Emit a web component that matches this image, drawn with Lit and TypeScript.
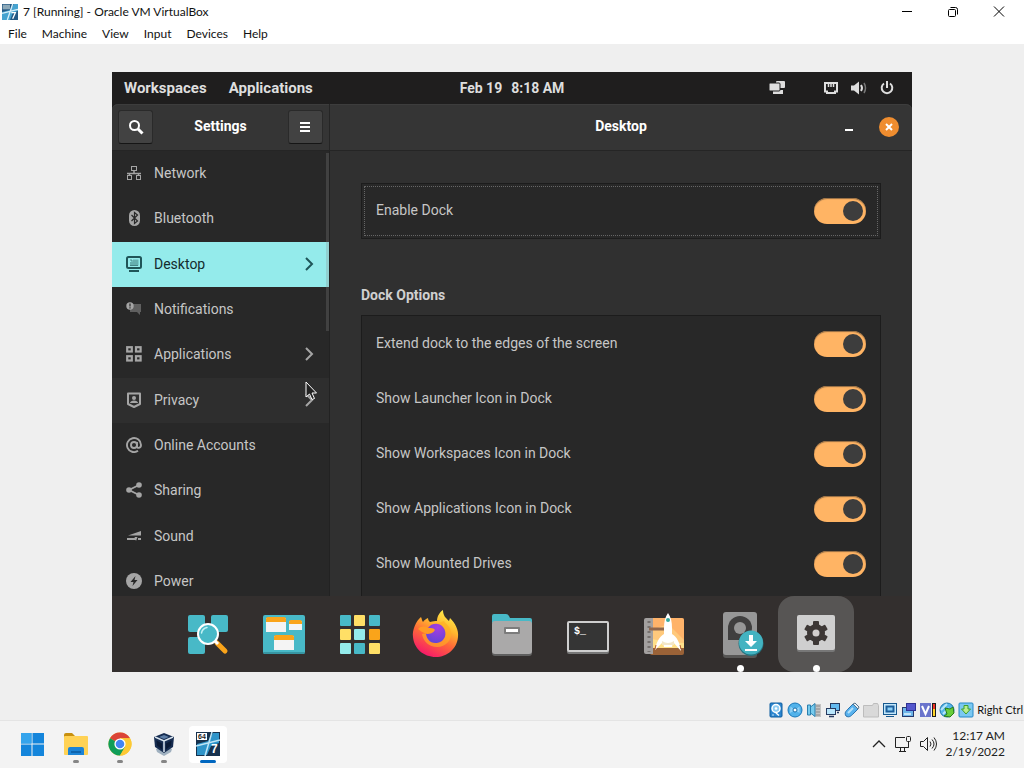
import { LitElement, html, svg, css } from "lit";
import { customElement, state } from "lit/decorators.js";
import { classMap } from "lit/directives/class-map.js";

const icon = (size: number, body: unknown) =>
  html`<svg width=${size} height=${size} viewBox="0 0 ${size} ${size}" aria-hidden="true">${body}</svg>`;

/* 16px symbolic icons of the settings sidebar */
const side: Record<string, unknown> = {
  network: svg`<g fill="none" stroke="currentColor"><rect x="5.5" y="1.5" width="5" height="4"/><rect x="1.5" y="10.5" width="4" height="4"/><rect x="10.5" y="10.5" width="4" height="4"/><path d="M8 5.500v3M1 8.500h14M3.500 8.500v2M12.500 8.500v2" stroke-width="1.500"/></g>`,
  bluetooth: svg`<rect x="3" y="0" width="11" height="16" rx="5.500" fill="currentColor"/><path d="M5.500 5l6 6L8.500 13.500v-11L11.500 5l-6 6" fill="none" stroke="#282828" stroke-width="1.200"/>`,
  desktop: svg`<rect x="1" y="1" width="14" height="11" rx="1.500" fill="none" stroke="currentColor" stroke-width="2"/><path d="M3 15h10" stroke="currentColor" stroke-width="2"/><path d="M4 8V6h3V3.500h5.500V9.500H4z" fill="currentColor" opacity=".4"/><path d="M4 4h2v2M4 9.500h8" fill="none" stroke="currentColor" opacity=".6"/>`,
  notifications: svg`<path d="M6 3h9v8h-1v3l-3-3H4V8z" fill="currentColor" opacity=".45"/><circle cx="4" cy="5" r="3.700" fill="currentColor"/><path d="M4 2.500v3M4 6.300v1.200" stroke="#282828" stroke-width="1.200"/>`,
  applications: svg`<g fill="none" stroke="currentColor" stroke-width="2.200"><rect x="1.200" y="1.200" width="4.600" height="4.300"/><rect x="10" y="1.200" width="4.600" height="4.300"/><rect x="1.200" y="10.200" width="4.600" height="4.300"/><rect x="10" y="10.200" width="4.600" height="4.300"/></g>`,
  privacy: svg`<path d="M2 1.500h12v10.500l-6 3-6-3z" fill="none" stroke="currentColor" stroke-width="2" stroke-linejoin="round"/><circle cx="8" cy="6" r="2" fill="currentColor"/><path d="M4 11c0-3.500 8-3.500 8 0z" fill="currentColor"/>`,
  accounts: svg`<g fill="none" stroke="currentColor" stroke-width="1.900"><circle cx="8" cy="8" r="3"/><path d="M11 5v4.500c0 2 4 2 4-1.500a7 7 0 1 0-3 5.800"/></g>`,
  sharing: svg`<path d="M13 3L3 8l10 5" fill="none" stroke="currentColor" stroke-width="1.800"/><circle cx="3" cy="8" r="2.800" fill="currentColor"/><circle cx="13" cy="3" r="2.800" fill="currentColor"/><circle cx="13" cy="13" r="2.800" fill="currentColor"/>`,
  sound: svg`<path d="M2 7.500L15 3v4.500z" fill="currentColor"/><path d="M1 11h9M12 11h3" stroke="currentColor" stroke-width="1.800"/><path d="M8.500 9h3l-1.500 4z" fill="currentColor"/>`,
  power: svg`<circle cx="8" cy="8" r="8" fill="currentColor"/><path d="M9.500 3L4.500 9H7.500L6.500 13l5-6H8.500z" fill="#282828"/>`,
};

const menuItems = ["File", "Machine", "View", "Input", "Devices", "Help"];

const sections = [
  { id: "network", label: "Network" },
  { id: "bluetooth", label: "Bluetooth" },
  { id: "desktop", label: "Desktop", sub: true },
  { id: "notifications", label: "Notifications" },
  { id: "applications", label: "Applications", sub: true },
  { id: "privacy", label: "Privacy", sub: true, hover: true },
  { id: "accounts", label: "Online Accounts" },
  { id: "sharing", label: "Sharing" },
  { id: "sound", label: "Sound" },
  { id: "power", label: "Power" },
];

const options = [
  "Extend dock to the edges of the screen",
  "Show Launcher Icon in Dock",
  "Show Workspaces Icon in Dock",
  "Show Applications Icon in Dock",
  "Show Mounted Drives",
];

const gridColors = ["#48b9c7", "#ffdf66", "#48b9c7", "#ffdf66", "#94ebeb", "#faa41a", "#94ebeb", "#48b9c7", "#ffdf66"];

/* 76px dock icons */
const dock = [
  { label: "Launcher", art: svg`<g fill="#48b9c7"><rect x="18" y="19" width="17" height="17" rx="2"/><rect x="41" y="19" width="17" height="17" rx="2"/><rect x="18" y="41" width="17" height="17" rx="2"/></g><path d="M47 47l8 8" stroke="#faa41a" stroke-width="5" stroke-linecap="round"/><path d="M45 45l3 3" stroke="#fff" stroke-width="3"/><circle cx="38" cy="38" r="10" fill="#48b9c7" stroke="#fff" stroke-width="2"/><path d="M31.500 37a7 7 0 0 1 5.500-5.500" fill="none" stroke="#c5f3f5" stroke-width="1.500" stroke-linecap="round"/>` },
  { label: "Workspaces", art: svg`<rect x="17" y="19" width="42" height="39" rx="2" fill="#48b9c7"/><path d="M17 56h42v0a2 2 0 0 1-2 2H19a2 2 0 0 1-2-2z" fill="#3796a3"/><g fill="#f4f4f4"><rect x="20" y="22" width="20" height="14"/><rect x="43" y="25" width="13" height="9"/><rect x="28" y="40" width="20" height="14"/></g><g fill="#faa41a"><path d="M20 26v-3a2 2 0 0 1 2-2h16a2 2 0 0 1 2 2v3zM43 28v-2a2 2 0 0 1 2-2h9a2 2 0 0 1 2 2v2zM28 44v-3a2 2 0 0 1 2-2h16a2 2 0 0 1 2 2v3z"/></g>` },
  { label: "Applications", art: gridColors.map((c, i) => svg`<rect x=${18 + (i % 3) * 15 - (i % 3 ? 1 : 0)} y=${19 + Math.floor(i / 3) * 14} width="11" height="11" rx="1" fill=${c}/>`) },
  { label: "Firefox", art: svg`<defs><linearGradient id="fx" x1=".8" y1="0" x2=".3" y2="1"><stop offset="0" stop-color="#fff44f"/><stop offset=".35" stop-color="#ffb52e"/><stop offset=".6" stop-color="#ff6a38"/><stop offset="1" stop-color="#f5156c"/></linearGradient><radialGradient id="fp" cx=".6" cy=".2" r=".9"><stop offset="0" stop-color="#a63ee0"/><stop offset="1" stop-color="#5b45d6"/></radialGradient></defs><path d="M23 21c1 2 1 4 2 5 1-2 3-3 5-4 0 2 1 3 2 4 3-1 5-1 7-1 0-5 3-9 6-11 0 6 3 8 6 11l1-3c5 5 9 12 8 19-1 12-11 20-22 20-13 0-22-9-23-20-1-7 3-16 8-20z" fill="url(#fx)"/><path d="M38 28c-4 0-5 3-5 3s6-1 10 2c-4 0-4 2-7 4-2 1-5 1-5 1-4-1-7 0-7 0 1 7 7 13 15 13 9 0 15-7 14-15-1-6-6-9-7-11-2 1-4 1-8 3z" fill="#ffad24" opacity=".65"/><path d="M30 32c3-5 11-6 15-1 5 6 2 15-6 16-7 1-11-5-11-10 3 0 6 0 8-2-2-2-4-2-6-3z" fill="url(#fp)"/><path d="M20 33c3-3 7-3 10-1 3 0 6 0 7 2-2 3-5 4-8 4l-5-2z" fill="#ff9b26"/>` },
  { label: "Files", art: svg`<rect x="18" y="44" width="40" height="16" rx="3" fill="#5f5f5f"/><path d="M18 27v-7a2 2 0 0 1 2-2h12q2 0 3 2l1 2h20a2 2 0 0 1 2 2v5z" fill="#48b9c7"/><rect x="18" y="25" width="40" height="33" rx="3" fill="#aaa9a9"/><rect x="30" y="31" width="16" height="7" rx="1" fill="#7c7c7c"/><rect x="32" y="33" width="12" height="3" fill="#fff"/>` },
  { label: "Terminal", art: svg`<rect x="17" y="29" width="42" height="29" rx="2" fill="#777"/><rect x="18" y="26" width="40" height="29" rx="1" fill="#353535" stroke="#cfcfcf" stroke-width="2"/><text x="24" y="38" class="prompt">$_</text>` },
  { label: "Popsicle", art: svg`<rect x="24" y="22" width="34" height="37" rx="2" fill="#9a6237"/><rect x="24" y="22" width="34" height="29" rx="2" fill="#ffb36a"/><path d="M26 34l16-6 16 16v7H26z" fill="#ffc97c"/><path d="M26 43l15 3 17 1v5H26z" fill="#ffe08a"/><path d="M20 22h7v36h-7a2 2 0 0 1-2-2V24q0-2 2-2z" fill="#a3a09f"/><path d="M23 25v31" stroke="#76716f" stroke-width="3" stroke-dasharray="2 3"/><path d="M23 33h16" stroke="#90674d" stroke-width="3"/><path d="M42 17c-3 4-4 9-4 15v6c-5 3-8 9-9 16l8-8 1 5h8l1-5 8 9c-1-8-4-14-9-17v-6c0-6-1-11-4-15z" fill="#fff"/><circle cx="42" cy="24" r="2" fill="#34a89c"/><path d="M36 45q6 4 12 0v4H36z" fill="#f3e6c8"/><path d="M29 53l1-4M55 53l-1-4" stroke="#b45b2d"/>` },
  { label: "Install Pop!_OS", running: true, art: svg`<rect x="21" y="20" width="34" height="42" rx="3" fill="#575655"/><rect x="21" y="16" width="34" height="43" rx="3" fill="#979797"/><path d="M38 20a12 12 0 0 1 0 24H26V32a12 12 0 0 1 12-12z" fill="#403f3f"/><circle cx="38" cy="32" r="6" fill="#979797"/><circle cx="49" cy="47.500" r="12.500" fill="#25747f"/><circle cx="49" cy="46.500" r="12" fill="#43b3c1"/><path d="M47 39h4v6h4l-6 6-6-6h4z" fill="#fff"/><path d="M43 54h12" stroke="#fff" stroke-width="2"/>` },
  { label: "Settings", running: true, active: true, art: svg`<rect x="19" y="25" width="38" height="31" rx="2" fill="#777"/><rect x="19" y="19" width="38" height="35" rx="2" fill="#cfcfcf"/><g fill="#3d3836"><circle cx="38" cy="37" r="9"/>${[0, 60, 120].map((a) => svg`<rect x="35" y="25" width="6" height="24" rx="1" transform="rotate(${a} 38 37)"/>`)}</g><circle cx="38" cy="37" r="3.500" fill="#d2cecc"/>` },
];

/* 16px machine status indicators */
const indicators = [
  { label: "Hard disks", art: svg`<rect x="2" y="1" width="12" height="14" rx="1" fill="#2d86cf" stroke="#0d5c9f"/><circle cx="8" cy="6.500" r="4" fill="#8fcdf3" stroke="#fff" stroke-width="1.500"/><circle cx="8" cy="6.500" r="1.300" fill="#fff"/><path d="M8 11l3 2.500" stroke="#fff" stroke-width="1.500"/><path d="M4 13h2" stroke="#bfe2f7"/>` },
  { label: "Optical drives", art: svg`<circle cx="8" cy="8" r="7" fill="#51b2ea" stroke="#1777b9"/><path d="M3.500 4.500L8 8 3 11zM12.500 4.500L8 8l4.500 3z" fill="#8fd0f5"/><circle cx="8" cy="8" r="2" fill="#fff" stroke="#1a6ea8"/>` },
  { label: "Audio", art: svg`<rect x="9" y="2" width="6" height="13" fill="#c4c4c4"/><path d="M10 4h4M10 7h4M10 10h4M10 13h4" stroke="#8a8a8a"/><path d="M1.500 3h3v10h-3zM4.500 5L9 1.500v13L4.500 11z" fill="#77cbed" stroke="#2b7fae"/>` },
  { label: "Network", art: svg`<rect x="5.500" y="1.500" width="9" height="7" fill="#63baf0" stroke="#263a60"/><rect x="1.500" y="6.500" width="9" height="6" fill="#b9e5fb" stroke="#263a60"/><path d="M4 14.500h5M12 10.500h2" stroke="#263a60" stroke-width="1.500"/>` },
  { label: "USB", art: svg`<path d="M2 14c-2-3 0-5 2-7l5-5 5 5-5 5c-2 2-4 4-7 2z" fill="#58b2ee" stroke="#2a72ac"/><path d="M9 2l2-1 4 4-1 2z" fill="#e7f4fb" stroke="#56728a"/><path d="M4 11l5-5" stroke="#b5e1fa" stroke-width="2"/>` },
  { label: "Shared folders", art: svg`<path d="M.5 15V3.500h9l1-2h4l1 2V15z" fill="#d9d9d9" stroke="#bdbdbd"/>` },
  { label: "Display", art: svg`<rect x="1.500" y="1.500" width="13" height="11" fill="#c4e8fb" stroke="#17598f"/><rect x="4.500" y="4.500" width="7" height="5" fill="#8dd1f7" stroke="#1c5f9c" stroke-width="2"/><path d="M4 14.500h8" stroke="#17598f"/>` },
  { label: "Recording", art: svg`<rect x="1.500" y="5.500" width="11" height="9" fill="#6db5ea" stroke="#26396c"/><rect x="5.500" y="1.500" width="9" height="7" fill="#5457cd" stroke="#2f3294"/><path d="M3 12h7" stroke="#c6e5f8" stroke-width="2"/>` },
  { label: "Virtualization", art: svg`<rect x="0" y="1" width="11" height="14" fill="#6a74cc"/><path d="M2 4l3.500 8L9 4" fill="none" stroke="#fff" stroke-width="2"/><path d="M12 1h4v14h-4z" fill="#1e1e1e"/><path d="M14 2v5" stroke="#f03228" stroke-width="2"/><path d="M14 7v7" stroke="#ffd52a" stroke-width="2"/>` },
  { label: "Mouse integration", art: svg`<circle cx="8" cy="8" r="7" fill="#55b5e8" stroke="#2279ae"/><path d="M2 8l6-6M4 12l6-6" stroke="#b7e4f8" stroke-width="2"/><path d="M6 6l5 1 3-2 1 6-4 4-6-1 3-2z" fill="#68ce3b" stroke="#287c1b"/>` },
  { label: "Keyboard capture", art: svg`<rect x="1" y="1" width="14" height="14" rx="1" fill="#7bc8f2" stroke="#2688c7"/><path d="M6 3.500h4V7h2.500L8 12 3.500 7H6z" fill="#b9ec8e" stroke="#3f9f2c"/>` },
];

/* 24px host taskbar icons */
const tasks = [
  { label: "Start", art: svg`<path d="M1 1h10.500v10.500H1zM12.500 1H24v10.500H12.500zM1 12.500h10.500V24H1zM12.500 12.500H24V24H12.500z" fill="#1485db"/><path d="M1 1h10.500v10.500H1z" fill="#35a4ec"/>` },
  { label: "File Explorer", run: true, art: svg`<path d="M0 3q0-2 2-2h6l3 3v5H0z" fill="#c8900f"/><rect y="4" width="24" height="19" rx="1" fill="#ffd255"/><path d="M4 23v-6q0-2 2-2h12q2 0 2 2v6z" fill="#1b83d6"/><path d="M7 20h10" stroke="#0d63ad" stroke-width="2"/>` },
  { label: "Chrome", run: true, art: svg`<circle cx="12" cy="12" r="11.500" fill="#fcc934"/><path d="M12 12L2 6.250A11.500 11.500 0 0 1 22 6.250H12z" fill="#db4437"/><path d="M12 12L2 6.250A11.500 11.500 0 0 0 12 23.500l5-8.600z" fill="#0f9d58"/><path d="M12 6.250h10a11.500 11.500 0 0 1-10 17.250l5-8.600z" fill="#fcc934"/><circle cx="12" cy="12" r="5.600" fill="#fff"/><circle cx="12" cy="12" r="4.300" fill="#4285f4"/>` },
  { label: "VirtualBox", run: true, art: svg`<path d="M4 17l8-3 8 3-1 3-7 4-7-4z" fill="#9fb0bf"/><path d="M2 5l10-4 10 4-1 10-9 6-9-6z" fill="#162c50"/><path d="M3 5l9 4 9-4M12 9v11" fill="none" stroke="#d9e4ee" stroke-width="1.500"/><path d="M7 5l5-2 5 2-5 2z" fill="#5d7ea6"/><path d="M4.500 8.500l5.500 3v6l-5-4zM19.500 8.500L14 11.500v6l5-4z" fill="#0a1a36"/>` },
  { label: "7 [Running]", run: true, active: true, art: svg`<rect width="24" height="24" fill="#17324e"/><path d="M1 23V12l11-3 5-8h6v10l-8 3-4 9z" fill="#2e94c9"/><path d="M16 0L9 24M0 14L24 8" stroke="#bfe5f5" stroke-width="1.500"/><rect x="1" y="1" width="10" height="7" fill="#fff"/><text x="2" y="7" class="bits">64</text><text x="15" y="21" class="seven">7</text>` },
];

@customElement("app-root")
export class AppRoot extends LitElement {
  @state() private selected = "desktop";

  static styles = css`
    :host { display: grid; grid-template-rows: auto auto 1fr auto auto; height: 100vh; overflow: hidden; background: #efefef; color: #111; font: 12px/16px Lato, "Noto Sans", sans-serif; }
    * { box-sizing: border-box; }
    button { font: inherit; color: inherit; background: none; border: 0; padding: 0; margin: 0; }
    svg { display: block; flex: none; }
    ul { list-style: none; margin: 0; padding: 0; }
    h1, h2 { margin: 0; font-size: inherit; }

    .titlebar { display: flex; align-items: center; height: 24px; padding: 0 2px; background: #fff; gap: 5px; }
    .titlebar h1 { flex: 1; font-weight: 400; }
    .controls { display: flex; }
    .controls button { width: 46px; height: 24px; display: grid; place-items: center; }
    .menubar { display: flex; gap: 15px; height: 20px; padding: 0 8px; background: #fff; }

    .stage { display: flex; min-height: 0; padding: 28px 112px 26px; }
    .guest { position: relative; flex: 1; min-width: 0; display: flex; flex-direction: column; overflow: hidden; background: #1f1e1e; color: #c6c6c6; font: 14px/20px Roboto, sans-serif; }
    .topbar { display: grid; grid-template-columns: 1fr auto 1fr; align-items: center; height: 32px; flex: none; padding: 0 12px; background: #1f1e1e; color: #dedede; font-weight: 700; font-size: 15px; }
    .topbar nav { display: flex; gap: 22px; }
    .clock { display: flex; gap: 9px; font-size: 14px; }
    .status { display: flex; justify-content: flex-end; gap: 12px; padding-right: 5px; }
    .status :first-child { margin-right: 26px; }

    .window { flex: 1; min-height: 0; display: grid; grid-template-columns: 218px 1fr; grid-template-rows: 47px 1fr; background: #303030; border-radius: 6px 6px 0 0; }
    .head { display: flex; align-items: center; justify-content: space-between; padding: 0 6px; background: #353535; border-bottom: 1px solid #252525; border-right: 1px solid #252525; color: #fff; box-shadow: inset 0 1px #3d3d3d; }
    .head.left { border-top-left-radius: 6px; }
    .head.right { display: grid; grid-template-columns: 1fr auto 1fr; padding: 0 13px; border-right: 0; border-top-right-radius: 6px; }
    .head h2 { font-weight: 700; padding-bottom: 2px; }
    .tool { width: 35px; height: 34px; display: grid; place-items: center; border: 1px solid #2a2a2a; border-bottom-color: #151515; border-radius: 3px; background: #424242; }
    .winbtns { display: flex; justify-content: flex-end; align-items: center; gap: 25px; }
    .round { width: 20px; height: 20px; border-radius: 50%; background: #ef8d2f; display: grid; place-items: center; }

    .sidebar { position: relative; min-height: 0; overflow: hidden; background: #282828; border-right: 1px solid #222; }
    .sidebar li:nth-child(3n + 2) { padding-bottom: 1px; }
    .item { width: 100%; height: 45px; display: flex; align-items: center; gap: 12px; padding: 0 12px 2px 14px; text-align: left; }
    .item svg { color: #a5a5a5; }
    .item span { flex: 1; }
    .item.hover { background: #2e2e2e; }
    .item.selected { background: #94ebeb; color: #132c2e; }
    .item.selected svg { color: #1f5558; }
    .scroll { position: absolute; top: 2px; right: 0; width: 3px; height: 40%; background: #8884; }

    .content { min-height: 0; overflow: hidden; padding: 32px 31px 0; }
    .card { background: #282828; border: 1px solid #1c1c1c; }
    .card.focus { padding: 2px; }
    .card.focus .row { height: 50px; padding: 0 12px; outline: 1px dotted #666; outline-offset: -1px; }
    .content h2 { margin: 46px 0 10px; font-weight: 700; color: #d0d0d0; }
    .row { display: flex; align-items: center; justify-content: space-between; height: 55px; padding: 0 14px; }
    .row span { padding-bottom: 2px; }
    .switch { appearance: none; width: 52px; height: 26px; margin: 0; padding: 3px; border-radius: 13px; background: #ffb464; box-shadow: inset 0 1px 1px #8f6a43; display: flex; justify-content: flex-end; }
    .switch::before { content: ""; width: 20px; height: 20px; border-radius: 50%; background: #3d3d3d; }
    .switch:not(:checked) { justify-content: flex-start; background: #555; }

    .dock { flex: none; display: flex; justify-content: center; height: 76px; background: #332f2e; }
    .dock button { position: relative; width: 76px; height: 76px; }
    .dock .active { background: #575554; border-radius: 16px; }
    .dot { position: absolute; bottom: 0; left: 35px; width: 7px; height: 7px; border-radius: 50%; background: #fff; }
    .prompt { font: 700 10px "Liberation Mono", monospace; fill: #fff; }
    .bits { font: 700 7px "Liberation Sans", sans-serif; fill: #222; }
    .seven { font: 700 12px "Liberation Sans", sans-serif; fill: #fff; }
    .cursor { position: absolute; left: 193px; top: 309px; }

    .vmstatus { display: flex; justify-content: flex-end; align-items: center; gap: 3px; height: 22px; padding: 1px 1px 0; font-size: 11px; white-space: nowrap; }
    .taskbar { display: flex; justify-content: space-between; height: 48px; padding: 0 19px 2px 10px; background: #f3f3f3; border-top: 1px solid #e4e4e4; }
    .tasks, .tray { display: flex; align-items: center; }
    .tasks button { position: relative; width: 44px; height: 45px; display: grid; place-items: center; }
    .tasks .active::before { content: ""; position: absolute; inset: 5px 3px 3px; border-radius: 4px; background: #fff; }
    .tasks svg { position: relative; }
    .tasks .run::after { content: ""; position: absolute; bottom: 3px; left: 19px; width: 6px; height: 3px; border-radius: 2px; background: #858585; }
    .tasks .active::after { left: 14px; width: 16px; background: #0067c0; }
    .tray { gap: 7px; color: #222; }
    .tray time { min-width: 61px; text-align: right; }
  `;

  private renderHost() {
    return html`
      <header class="titlebar">
        <svg width="16" height="16" viewBox="0 0 24 24" aria-hidden="true"><rect width="24" height="24" fill="#245985"/><path d="M0 24V12l12-3 6-9h6v10l-8 4-4 10z" fill="#46a3d0"/><path d="M16 0L8 24M0 14L24 8" stroke="#d8f0fa" stroke-width="2"/><rect x="1" y="1" width="11" height="7" fill="#8da9b8"/><path d="M14 13h6l-4 9" fill="none" stroke="#fff" stroke-width="2"/></svg>
        <h1>7 [Running] - Oracle VM VirtualBox</h1>
        <div class="controls">
          <button aria-label="Minimize">${icon(12, svg`<path d="M1 5.500h10" stroke="#000"/>`)}</button>
          <button aria-label="Restore">${icon(12, svg`<g fill="none" stroke="#000"><rect x="1.500" y="3.500" width="7" height="7" rx="1"/><path d="M3.500 1.500h5q2 0 2 2v5"/></g>`)}</button>
          <button aria-label="Close">${icon(12, svg`<path d="M1 0.500l10 10M11 .5L1 10.500" stroke="#000"/>`)}</button>
        </div>
      </header>
      <nav class="menubar">${menuItems.map((m) => html`<button>${m}</button>`)}</nav>`;
  }

  private renderTopbar() {
    return html`<div class="topbar">
      <nav><button>Workspaces</button><button>Applications</button></nav>
      <div class="clock"><span>Feb 19</span><span>8:18 AM</span></div>
      <div class="status">
        ${icon(16, svg`<rect x="7" y="1" width="9" height="7" rx="1" fill="#dedede"/><rect x="4" y="10" width="10" height="4" fill="#dedede"/><rect x="0" y="3" width="11" height="8" rx="1" fill="#dedede" stroke="#1f1e1e"/>`)}
        ${icon(16, svg`<path d="M2 3v8.500h2V13h8v-1.500h2V3z" fill="none" stroke="#dedede" stroke-width="2"/><path d="M5.500 3v4M8 3v4M10.500 3v4" stroke="#dedede" stroke-width="1.500"/>`)}
        ${icon(16, svg`<path d="M0 5.500h3L8 1.500v13L3 10.500H0z" fill="#dedede"/><path d="M10 5q2 3 0 6" fill="none" stroke="#dedede" stroke-width="2"/><path d="M13 3q3 5 0 10" fill="none" stroke="#777" stroke-width="1.500"/>`)}
        ${icon(16, svg`<path d="M5 3.500a5.300 5.300 0 1 0 6 0M8 1v7" fill="none" stroke="#dedede" stroke-width="2"/>`)}
      </div>
    </div>`;
  }

  private renderSidebar() {
    return html`<nav class="sidebar">
      <ul>${sections.map((s) => html`<li>
        <button class=${classMap({ item: true, selected: s.id === this.selected, hover: !!s.hover })} @click=${() => (this.selected = s.id)}>
          ${icon(16, side[s.id])}<span>${s.label}</span>
          ${s.sub ? icon(16, svg`<path d="M5 2l6 6-6 6" fill="none" stroke="currentColor" stroke-width="2"/>`) : ""}
        </button></li>`)}</ul>
      <div class="scroll"></div>
    </nav>`;
  }

  private renderRow(label: string) {
    return html`<label class="row"><span>${label}</span><input class="switch" type="checkbox" checked /></label>`;
  }

  render() {
    return html`
      ${this.renderHost()}
      <main class="stage">
        <div class="guest">
          ${this.renderTopbar()}
          <section class="window">
            <div class="head left">
              <button class="tool" aria-label="Search">${icon(16, svg`<circle cx="6.500" cy="6.500" r="4.500" fill="none" stroke="#fff" stroke-width="2"/><path d="M10 10l4.500 4.500" stroke="#fff" stroke-width="3"/>`)}</button>
              <h2>Settings</h2>
              <button class="tool" aria-label="Menu">${icon(16, svg`<path d="M2 4h10M2 8h10M2 12h10" stroke="#fff" stroke-width="2"/>`)}</button>
            </div>
            <div class="head right">
              <span></span><h2>Desktop</h2>
              <div class="winbtns">
                <button aria-label="Minimize">${icon(10, svg`<path d="M1 8h8" stroke="#fff" stroke-width="2"/>`)}</button>
                <button class="round" aria-label="Close">${icon(10, svg`<path d="M2 2l6 6M8 2L2 8" stroke="#fff" stroke-width="2"/>`)}</button>
              </div>
            </div>
            ${this.renderSidebar()}
            <div class="content">
              <div class="card focus">${this.renderRow("Enable Dock")}</div>
              <h2>Dock Options</h2>
              <div class="card options">${options.map((o) => this.renderRow(o))}<div class="row"></div></div>
            </div>
          </section>
          <nav class="dock">${dock.map((d) => html`<button class=${classMap({ active: !!d.active })} aria-label=${d.label}>${icon(76, d.art)}${d.running ? html`<span class="dot"></span>` : ""}</button>`)}</nav>
          <svg class="cursor" width="12" height="20" viewBox="0 0 12 20" aria-hidden="true"><path d="M1 1v15l3.500-3 2.500 5.500 2.500-1L7 12h4.500z" fill="#222" stroke="#fff"/></svg>
        </div>
      </main>
      <div class="vmstatus">${indicators.map((i) => html`<span role="img" aria-label=${i.label}>${icon(16, i.art)}</span>`)}<span>Right Ctrl</span></div>
      <footer class="taskbar">
        <div class="tasks">${tasks.map((t) => html`<button class=${classMap({ run: !!t.run, active: !!t.active })} aria-label=${t.label}>${icon(24, t.art)}</button>`)}</div>
        <div class="tray">
          ${icon(16, svg`<path d="M2 11l6-6 6 6" fill="none" stroke="currentColor" stroke-width="1.300"/>`)}
          ${icon(18, svg`<g fill="none" stroke="currentColor"><path d="M11 2.500H1.500v10h13v-4M5 16.500h7M6.500 12.500v4M10.500 12.500v4"/><rect x="12.500" y="1.500" width="4" height="5" rx="1"/><path d="M14.500 6.500v6"/></g>`)}
          ${icon(18, svg`<g fill="none" stroke="currentColor"><path d="M1.500 6.500h3l4-4v13l-4-4h-3zM11 6.500q2 2.500 0 5M13 4.500q4 4.500 0 9M15 2.500q5 6.500 0 13"/></g>`)}
          <time datetime="2022-02-19T00:17">12:17 AM<br />2/19/2022</time>
        </div>
      </footer>`;
  }
}
